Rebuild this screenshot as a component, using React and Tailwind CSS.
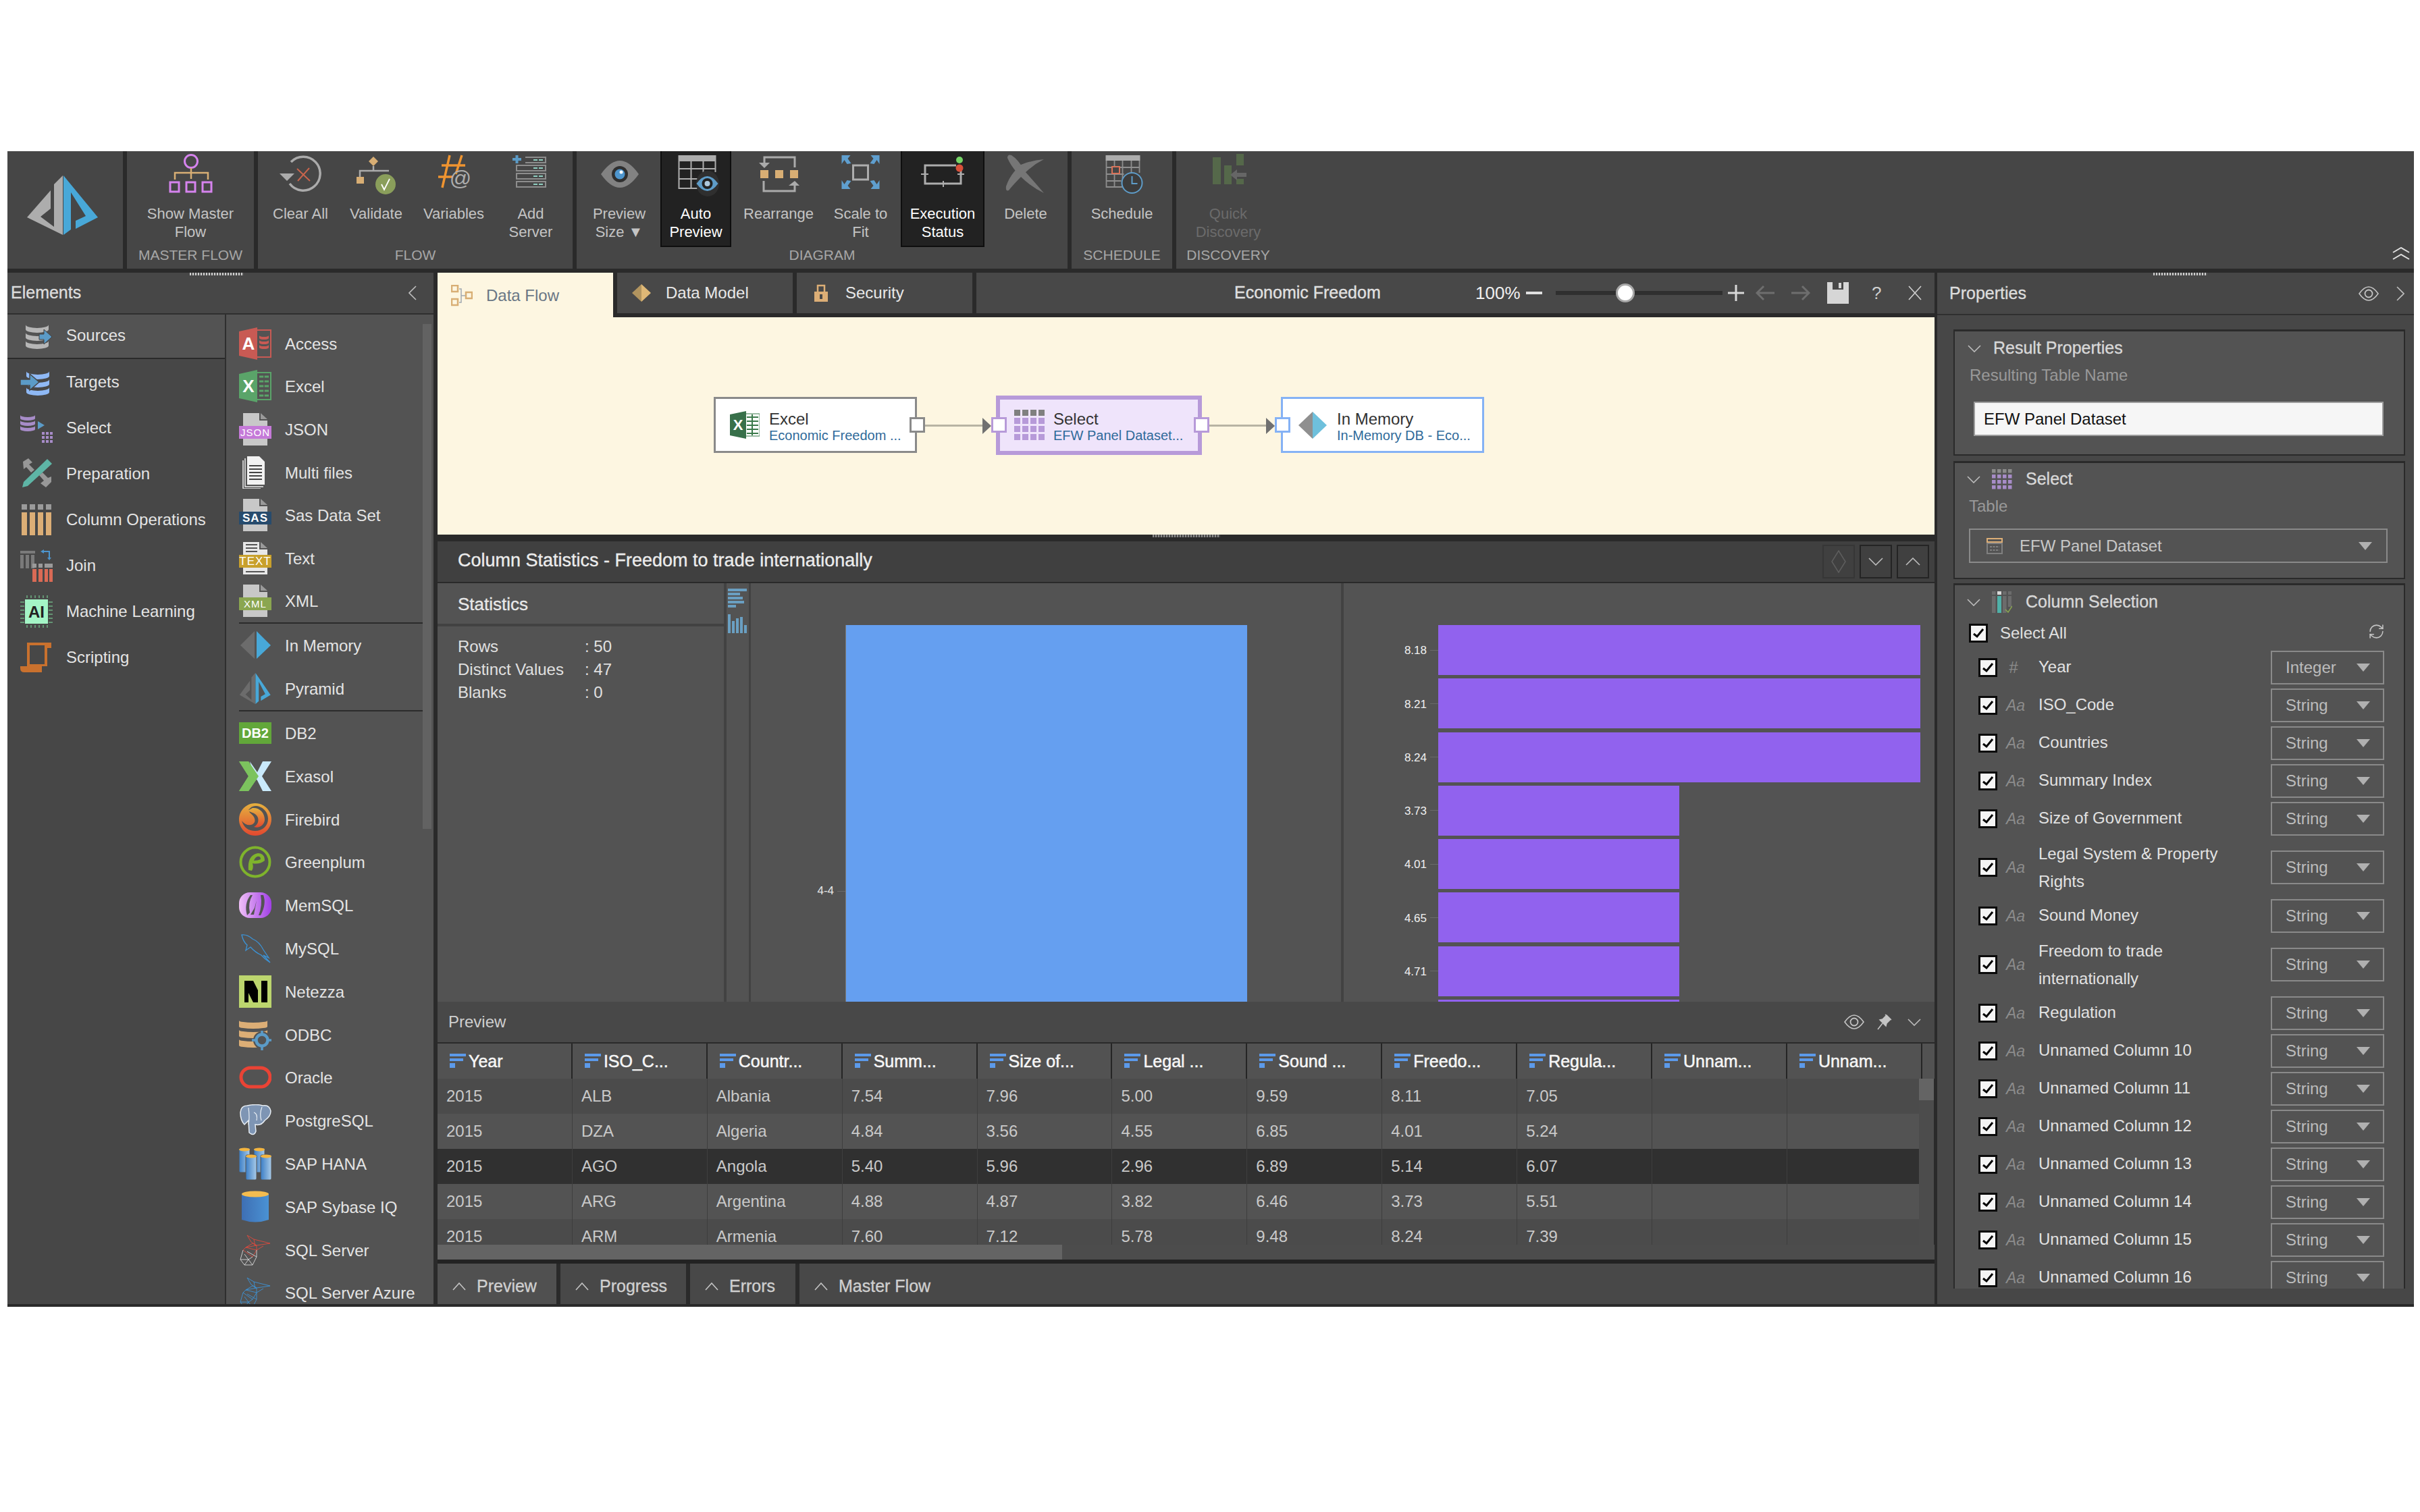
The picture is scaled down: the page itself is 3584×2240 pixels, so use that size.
import React from 'react';
import { RefreshCw } from 'lucide-react';

const med = '[-webkit-text-stroke:0.35px_currentColor]';
const med2 = '[-webkit-text-stroke:0.5px_currentColor]';

function Chev({ dir = 'down', w = 20, h = 11, color = '#bdbdbd', sw = 1.6 }) {
  const pts = {
    down: `1,1 ${w / 2},${h - 1} ${w - 1},1`,
    up: `1,${h - 1} ${w / 2},1 ${w - 1},${h - 1}`,
    left: `${w - 1},1 1,${h / 2} ${w - 1},${h - 1}`,
    right: `1,1 ${w - 1},${h / 2} 1,${h - 1}`,
  }[dir];
  return (
    <svg width={w} height={h} viewBox={`0 0 ${w} ${h}`} className="shrink-0">
      <polyline points={pts} fill="none" stroke={color} strokeWidth={sw} />
    </svg>
  );
}

function Eye({ color = '#c4c4c4' }) {
  return (
    <svg width="30" height="22" viewBox="0 0 30 22" className="shrink-0">
      <path d="M1 11 Q8 1 15 1 Q22 1 29 11 Q22 21 15 21 Q8 21 1 11Z" fill="none" stroke={color} strokeWidth="1.6" />
      <circle cx="15" cy="11" r="5.5" fill="none" stroke={color} strokeWidth="1.8" />
    </svg>
  );
}

function Caret({ color = '#b0b0b0' }) {
  return (
    <svg width="20" height="12" viewBox="0 0 20 12" className="shrink-0">
      <path d="M0 0 H20 L10 12Z" fill={color} />
    </svg>
  );
}

function TB({ cx, children }) {
  return (
    <svg width="100" height="79" viewBox={`${cx - 50} 224 100 79`} className="shrink-0">
      {children}
    </svg>
  );
}

function Btn({ w, cx, label, active, dim, children }) {
  return (
    <div className={`h-[142px] flex flex-col items-center shrink-0 ${w} ${active ? 'bg-[#222222] border-x-2 border-b-2 border-[#0e0e0e]' : ''}`}>
      <TB cx={cx}>{children}</TB>
      <div className={`text-[22px] leading-[27px] text-center whitespace-pre-line ${active ? 'text-white' : dim ? 'text-[#6b6b6b]' : 'text-[#c4c4c4]'}`}>{label}</div>
    </div>
  );
}

function Group({ cls, label, children }) {
  return (
    <div className={`bg-[#464646] flex flex-col shrink-0 ${cls}`}>
      <div className="flex h-[142px]">{children}</div>
      <div className="h-[24px] leading-[24px] text-center text-[21px] text-[#a6a6a6]">{label}</div>
    </div>
  );
}

function Logo() {
  return (
    <svg width="110" height="92" viewBox="38 258 110 92">
      <polygon points="93,260 93,348 40,322 75,282 75,309 60,321 80,336 80,273" fill="#adadad" />
      <polygon points="94,260 145,322 112,339 112,327 127,320 105,285 105,340 94,348" fill="#48a8d8" />
    </svg>
  );
}

function Toolbar() {
  return (
    <div className="flex h-[174px] gap-[6px] shrink-0">
      <div className="w-[171px] bg-[#464646] flex items-center justify-center shrink-0 pb-[14px] pr-[7px]">
        <Logo />
      </div>
      <Group cls="w-[188px]" label="MASTER FLOW">
        <Btn w="w-[188px]" cx={282} label={'Show Master\nFlow'}>
          <circle cx="283" cy="239" r="9.5" fill="none" stroke="#d683ee" strokeWidth="3" />
          <path d="M283 249 V265 M259 266 V256 H308 V266" fill="none" stroke="#d8ae74" strokeWidth="2.5" />
          <g fill="none" stroke="#d683ee" strokeWidth="3">
            <rect x="252" y="270" width="13" height="14" />
            <rect x="276" y="270" width="13" height="14" />
            <rect x="300" y="270" width="13" height="14" />
          </g>
        </Btn>
      </Group>
      <Group cls="w-[466px]" label="FLOW">
        <div className="w-[7px] shrink-0" />
        <Btn w="w-[112px]" cx={445} label="Clear All">
          <path d="M431 240 A25 25 0 1 1 429 272" fill="none" stroke="#ababab" strokeWidth="3.5" />
          <polygon points="414,257 436,257 425,268" fill="#ababab" />
          <path d="M440 250 L459 268 M458 249 L441 268" stroke="#c9654c" strokeWidth="2" fill="none" />
        </Btn>
        <Btn w="w-[112px]" cx={557} label="Validate">
          <polygon points="553,232 560,239 553,246 546,239" fill="#d8ae74" />
          <path d="M553 246 V253 M533 263 V253 H576" stroke="#ababab" strokeWidth="2.5" fill="none" />
          <rect x="528" y="262" width="11" height="10" fill="#d8ae74" />
          <circle cx="571" cy="273" r="15" fill="#8a9e5b" />
          <path d="M565 273 L569 281 L577 265" stroke="#fff" strokeWidth="1.8" fill="none" />
        </Btn>
        <Btn w="w-[118px]" cx={672} label="Variables">
          <path d="M666 230 L655 278 M684 230 L675 258 M654 245 H689 M649 262 H670" stroke="#ef9430" strokeWidth="3.5" fill="none" />
          <text x="682" y="275" fontSize="32" textAnchor="middle" fill="#adadad">@</text>
        </Btn>
        <Btn w="w-[110px]" cx={786} label={'Add\nServer'}>
          <path d="M759 236 H772 M765.5 230 V242" stroke="#5b9bc7" strokeWidth="4" fill="none" />
          <g fill="none" stroke="#8d8d8d" strokeWidth="2">
            <path d="M778 233 H808 V241 H778" />
            <rect x="765" y="245" width="43" height="8" />
            <rect x="765" y="257" width="43" height="8" />
            <rect x="765" y="269" width="43" height="8" />
          </g>
          <path d="M790 237 H796 M798 237 H804 M790 249 H796 M798 249 H804 M790 261 H796 M798 261 H804 M790 273 H796 M798 273 H804" stroke="#8fd0c2" strokeWidth="2" />
        </Btn>
      </Group>
      <Group cls="w-[727px]" label="DIAGRAM">
        <Btn w="w-[124px] pl-[2px]" cx={917} label={'Preview\nSize \u25BC'}>
          <path d="M890 258 Q904 238 918 238 Q932 238 946 258 Q932 278 918 278 Q904 278 890 258Z" fill="#828282" />
          <circle cx="918" cy="258" r="12" fill="#2f2f2f" />
          <circle cx="918" cy="258" r="7.5" fill="#4d95cd" />
          <circle cx="920" cy="255" r="2.5" fill="#fff" />
        </Btn>
        <Btn w="w-[105px]" cx={1030.5} label={'Auto\nPreview'} active>
          <rect x="1004" y="230" width="56" height="9" fill="#adadad" />
          <path d="M1005 239 V279 H1040 M1059 239 V255 M1005 250 H1059 M1005 265 H1036 M1023 239 V279 M1041 239 V258" stroke="#adadad" strokeWidth="2" fill="none" />
          <ellipse cx="1047.5" cy="272" rx="17" ry="19" fill="#2f2f2f" />
          <path d="M1031 272 Q1047 250 1063 272 Q1047 294 1031 272Z" fill="#5e9cc8" />
          <circle cx="1047" cy="272" r="8" fill="#222" />
          <circle cx="1047" cy="272" r="4" fill="#aec8dc" />
        </Btn>
        <Btn w="w-[140px]" cx={1153} label="Rearrange">
          <path d="M1132 243 V233 H1177 V248 M1131 268 V283 H1177 V274" stroke="#ababab" strokeWidth="3" fill="none" />
          <polygon points="1124,241 1140,241 1132,249" fill="#ababab" />
          <polygon points="1168,275 1184,275 1177,268" fill="#ababab" />
          <g fill="#d8ae74">
            <rect x="1126" y="252" width="12" height="12" />
            <rect x="1148" y="252" width="12" height="12" />
            <rect x="1170" y="252" width="12" height="12" />
          </g>
        </Btn>
        <Btn w="w-[103px] mr-[8px]" cx={1274.5} label={'Scale to\nFit'}>
          <rect x="1263" y="245" width="22" height="21" fill="none" stroke="#adadad" strokeWidth="3" />
          <g fill="#5f9fcf">
            <polygon points="1246,230 1259,230 1255,235 1260,242 1254,243 1250,237 1246,243" />
            <polygon points="1302,230 1289,230 1293,235 1288,242 1294,243 1298,237 1302,243" />
            <polygon points="1246,280 1259,280 1255,275 1260,268 1254,267 1250,273 1246,267" />
            <polygon points="1302,280 1289,280 1293,275 1288,268 1294,267 1298,273 1302,267" />
          </g>
        </Btn>
        <Btn w="w-[124px]" cx={1396} label={'Execution\nStatus'} active>
          <path d="M1416 245 H1370 V272 H1423 V252" stroke="#adadad" strokeWidth="3" fill="none" />
          <path d="M1364 258 H1375 M1418 258 H1428 M1397 268 V277" stroke="#adadad" strokeWidth="2" />
          <circle cx="1421" cy="237" r="5" fill="#76d667" />
          <circle cx="1421" cy="249" r="5.5" fill="#d9503a" />
        </Btn>
        <Btn w="w-[122px]" cx={1519} label="Delete">
          <path d="M1492 234 Q1492 228 1498 230 Q1508 236 1518 254 Q1536 274 1546 286 Q1526 276 1512 262 Q1498 248 1492 234Z" fill="#767676" />
          <path d="M1546 236 Q1530 244 1516 258 Q1500 274 1494 282 Q1489 284 1490 276 Q1496 258 1512 244 Q1526 238 1546 236Z" fill="#767676" />
        </Btn>
      </Group>
      <Group cls="w-[149px]" label="SCHEDULE">
        <Btn w="w-[149px]" cx={1661.5} label="Schedule">
          <rect x="1637" y="230" width="51" height="8" fill="#adadad" />
          <path d="M1638 238 V277 H1664 M1650 238 V277 M1662 238 V277 M1675 238 V256 M1687 238 V256 M1638 248 H1687 M1638 258 H1664 M1638 268 H1660" stroke="#8e8e8e" strokeWidth="1.8" fill="none" />
          <rect x="1646.5" y="247" width="11" height="10" fill="#464646" stroke="#d9735a" strokeWidth="2" />
          <circle cx="1676" cy="271" r="15" fill="#3c3c3c" stroke="#5e9cc8" strokeWidth="2" />
          <path d="M1676 261 V272 H1684" stroke="#5e9cc8" strokeWidth="2" fill="none" />
        </Btn>
      </Group>
      <div className="flex-1 bg-[#464646] flex justify-between">
        <div className="w-[154px] flex flex-col">
          <div className="flex h-[142px]">
            <Btn w="w-[154px]" cx={1819} label={'Quick\nDiscovery'} dim>
              <g fill="#55684a">
                <rect x="1796" y="233" width="12" height="40" />
                <rect x="1813" y="245" width="11" height="28" />
                <rect x="1831" y="228" width="11" height="17" />
                <rect x="1831" y="265" width="11" height="8" />
              </g>
              <polygon points="1822,259 1832,251 1832,256 1846,256 1846,262 1832,262 1832,267" fill="#666" />
            </Btn>
          </div>
          <div className="h-[24px] leading-[24px] text-center text-[21px] text-[#a6a6a6]">DISCOVERY</div>
        </div>
        <div className="flex flex-col self-end gap-[1px] pr-[6px] pb-[13px]">
          <Chev dir="up" w={26} h={9} color="#e0e0e0" sw={2} />
          <Chev dir="up" w={26} h={9} color="#e0e0e0" sw={2} />
        </div>
      </div>
    </div>
  );
}

function Db({ x, y, rx, ry = 5, h = 8, gap = 3, n = 3, fill }) {
  const out = [];
  for (let i = 0; i < n; i++) {
    const top = y + i * (h + gap);
    out.push(<path key={i} d={`M${x} ${top} v${h} a${rx} ${ry} 0 0 0 ${2 * rx} 0 v${-h} a${rx} ${ry} 0 0 1 ${-2 * rx} 0z`} fill={fill} />);
  }
  return <g>{out}</g>;
}

function Ic({ children, w = 48, h = 48 }) {
  return (
    <svg width={w} height={h} viewBox={`0 0 ${w} ${h}`} className="shrink-0">
      {children}
    </svg>
  );
}

const navIcons = {
  Sources: (
    <Ic>
      <Db x={8} y={8} rx={17} ry={5} h={7} gap={5} fill="#b6b6b6" />
      <polygon points="28,22 35,22 35,15 47,26 35,37 35,30 28,30" fill="#5b9bc7" stroke="#3f3f3f" strokeWidth="1" />
    </Ic>
  ),
  Targets: (
    <Ic>
      <Db x={9} y={8} rx={17} ry={5} h={7} gap={5} fill="#8fb9f5" />
      <polygon points="0,20 14,20 14,12 28,24 14,36 14,29 0,29" fill="#5b9bc7" stroke="#474747" strokeWidth="1.5" />
    </Ic>
  ),
  Select: (
    <Ic>
      <Db x={0} y={5} rx={11} ry={3} h={5} gap={3} fill="#a78cc8" />
      <polygon points="26,14 36,20 26,26" fill="#5b9bc7" />
      <g fill="#a78cc8">
        {[0, 1, 2].map((r) => [0, 1, 2].map((c) => <rect key={`${r}${c}`} x={32 + c * 6} y={30 + r * 6} width="4" height="4" />))}
      </g>
    </Ic>
  ),
  Preparation: (
    <Ic>
      <path d="M4 6 L12 1 L18 7 L13 10 L21 18 L16 22 L9 14 L5 17 Z M28 26 L33 22 L41 30 L46 28 L46 36 L38 44 L30 38 L35 34Z" fill="#989898" />
      <polygon points="40,2 47,9 11,42 3,44 5,36" fill="#5eb5a6" />
    </Ic>
  ),
  'Column Operations': (
    <Ic>
      <g fill="#9a9a9a">
        <rect x="2" y="1" width="8" height="8" /><rect x="14" y="1" width="8" height="8" /><rect x="26" y="1" width="8" height="8" /><rect x="38" y="1" width="8" height="8" />
      </g>
      <g fill="#dcae76">
        <rect x="2" y="13" width="8" height="34" /><rect x="14" y="13" width="8" height="34" /><rect x="26" y="13" width="8" height="34" /><rect x="38" y="13" width="8" height="34" />
      </g>
    </Ic>
  ),
  Join: (
    <Ic>
      <rect x="0" y="2" width="22" height="4" fill="#7a7a7a" />
      <g fill="#7a7a7a">
        <rect x="0" y="8" width="5" height="20" /><rect x="8" y="8" width="5" height="20" /><rect x="16" y="8" width="5" height="20" />
      </g>
      <path d="M32 3 H43 V12" stroke="#4d95cd" strokeWidth="2" fill="none" />
      <polygon points="30,3 35,0 35,6" fill="#4d95cd" /><polygon points="40,12 46,12 43,16" fill="#4d95cd" />
      <g fill="#9a9a9a"><rect x="18" y="21" width="6" height="6" /><rect x="27" y="21" width="6" height="6" /><rect x="36" y="21" width="6" height="6" /><rect x="42" y="21" width="6" height="6" /></g>
      <g fill="#d96a55"><rect x="18" y="29" width="6" height="19" /><rect x="27" y="29" width="6" height="19" /><rect x="36" y="29" width="5" height="19" /><rect x="43" y="29" width="5" height="19" /></g>
    </Ic>
  ),
  'Machine Learning': (
    <Ic>
      <path d="M10 0 V48 M16 0 V48 M22 0 V48 M28 0 V48 M34 0 V48 M40 0 V48 M0 10 H48 M0 16 H48 M0 22 H48 M0 28 H48 M0 34 H48 M0 40 H48" stroke="#6fae83" strokeWidth="1.5" />
      <rect x="6" y="4" width="36" height="40" fill="#474747" />
      <rect x="7" y="6" width="34" height="36" fill="#a4f5c6" />
      <text x="24" y="33" fontSize="24" fontWeight="700" textAnchor="middle" fill="#222">AI</text>
    </Ic>
  ),
  Scripting: (
    <Ic>
      <path d="M10 2 H46 V10 H40 V37 H32 V46 H6 Q0 46 0 40 V37 H10 Z M14 6 V34 H36 V6 Z" fill="#c9712e" fillRule="evenodd" />
    </Ic>
  ),
};

function FileIc({ banner, label, page = '#c8c8c8', lines, bold, lg }) {
  return (
    <Ic>
      <polygon points="6,0 30,0 30,11 42,11 42,48 6,48" fill={page} />
      <polygon points="32,0 42,9 32,9" fill="#9a9a9a" />
      {lines && <path d="M10 4 H27 M10 9 H27 M10 14 H27 M10 44 H38" stroke="#555" strokeWidth="2" />}
      <rect x="0" y="19" width="48" height="19" fill={banner} />
      <text x="24" y="34" fontSize={lg ? 17 : 15} fontWeight={bold ? 700 : 400} letterSpacing="1" textAnchor="middle" fill="#fff">{label}</text>
    </Ic>
  );
}

const wire = (a, b) => (
  <Ic>
    <g fill="none" strokeWidth="0.9">
      <path d="M12 2 L22 8 L30 10 L46 14 L26 17 L20 14 L10 20 L26 24 L20 34 L6 24 L10 20 M12 2 L18 12 L26 17 M22 8 L24 18 M10 20 L26 17 L26 24 L36 18" stroke={a} />
      <path d="M6 24 L2 38 L8 46 L20 46 L26 34 L26 24 M2 38 L14 38 L20 46 M8 30 L14 38 L20 34 M8 46 L14 38 M26 34 L12 26" stroke={b} />
    </g>
  </Ic>
);

const listIcons = {
  Access: (
    <Ic>
      <rect x="26" y="4" width="21" height="40" fill="none" stroke="#c85a54" strokeWidth="2" />
      <Db x={30} y={12} rx={7} ry={2} h={4} gap={3} fill="#c85a54" />
      <polygon points="0,6 27,0 27,48 0,42" fill="#c85a54" />
      <text x="14" y="33" fontSize="26" fontWeight="700" textAnchor="middle" fill="#fff">A</text>
    </Ic>
  ),
  Excel: (
    <Ic>
      <rect x="26" y="4" width="21" height="40" fill="none" stroke="#5aa469" strokeWidth="2" />
      <path d="M30 10 H44 M30 17 H44 M30 24 H44 M30 31 H44 M30 38 H44" stroke="#5aa469" strokeWidth="3" />
      <path d="M37 8 V41" stroke="#535353" strokeWidth="1.5" />
      <polygon points="0,6 27,0 27,48 0,42" fill="#5aa469" />
      <text x="14" y="33" fontSize="26" fontWeight="700" textAnchor="middle" fill="#fff">X</text>
    </Ic>
  ),
  JSON: <FileIc banner="#c57ad8" label="JSON" />,
  'Multi files': (
    <Ic>
      <path d="M6 6 V48 H32 M9 3 V45 H36" fill="none" stroke="#f0f0f0" strokeWidth="1.5" />
      <polygon points="12,0 30,0 38,8 38,42 12,42" fill="#f2f2f2" />
      <path d="M15 14 H34 M15 19 H34 M15 24 H34 M15 29 H34 M15 34 H34" stroke="#444" strokeWidth="2" />
    </Ic>
  ),
  'Sas Data Set': <FileIc banner="#274b6d" label="SAS" bold lg />,
  Text: <FileIc banner="#c8a02c" label="TEXT" page="#e8e8e8" lines lg />,
  XML: <FileIc banner="#8aa650" label="XML" />,
  'In Memory': (
    <Ic>
      <polygon points="23,3 23,44 2,24" fill="#6c6c6c" />
      <polygon points="26,3 26,44 47,24" fill="#48a8d8" />
    </Ic>
  ),
  Pyramid: (
    <svg width="48" height="48" viewBox="38 258 110 92" preserveAspectRatio="none" className="shrink-0">
      <polygon points="93,260 93,348 40,322 75,282 75,309 60,321 80,336 80,273" fill="#6c6c6c" />
      <polygon points="94,260 145,322 112,339 112,327 127,320 105,285 105,340 94,348" fill="#48a8d8" />
    </svg>
  ),
  DB2: (
    <Ic>
      <rect x="0" y="8" width="48" height="32" fill="#62a73a" />
      <text x="24" y="31" fontSize="20" fontWeight="700" textAnchor="middle" fill="#fff">DB2</text>
    </Ic>
  ),
  Exasol: (
    <Ic>
      <polygon points="0,2 14,2 29,24 14,46 0,46 14,24" fill="#7cc35e" />
      <polygon points="16,2 27,18 35,2 48,2 34,24 48,46 35,46 27,30 22,24" fill="#c9eafc" />
      <polygon points="0,2 14,2 29,24 14,46 0,46 14,24" fill="#7cc35e" />
    </Ic>
  ),
  Firebird: (
    <Ic>
      <defs>
        <linearGradient id="fb" x1="0" y1="0" x2="0" y2="1">
          <stop offset="0" stopColor="#e5b13e" /><stop offset="1" stopColor="#e2482f" />
        </linearGradient>
      </defs>
      <path fillRule="evenodd" fill="url(#fb)" d="M24 0 A24 24 0 1 1 23.9 0Z M24 4 C34 4 43 12 43 23 C43 34 34 41 24 41 C14 41 7 36 4 26 C10 34 20 34 23 28 C25 22 20 17 16 14 L14 10 C17 6 20 4 24 4Z" />
      <path fill="url(#fb)" d="M13 11 L20 7 C30 6 38 14 38 24 C38 32 30 38 22 35 C28 32 31 24 26 18 C23 14 18 14 13 11Z" />
    </Ic>
  ),
  Greenplum: (
    <Ic>
      <circle cx="24" cy="24" r="21.5" fill="none" stroke="#7fb32c" strokeWidth="4" />
      <path d="M14 36 Q12 14 28 11 Q38 11 38 22 Q30 28 20 26 Q22 32 19 37Z M22 22 Q28 22 32 20 Q32 15 27 16 Q23 18 22 22Z" fill="#7fb32c" fillRule="evenodd" />
    </Ic>
  ),
  MemSQL: (
    <Ic>
      <defs>
        <linearGradient id="ms" x1="0" y1="0" x2="1" y2="0">
          <stop offset="0" stopColor="#f0c0f7" /><stop offset="1" stopColor="#a13fe6" />
        </linearGradient>
      </defs>
      <rect x="0" y="5" width="48" height="38" rx="16" fill="url(#ms)" />
      <path d="M17 9 L20 9 Q13 20 16 35 L12 39 Q7 22 17 9Z M32 9 L36 9 Q41 22 32 39 L29 39 Q35 24 32 9Z M26 17 L22 38 L17 38 L23 28Z" fill="#535353" />
    </Ic>
  ),
  MySQL: (
    <Ic>
      <path d="M4 4 Q12 3 20 10 Q30 14 36 26 L44 38 L36 34 L46 45 Q38 40 33 34 Q24 30 17 22 L10 27 L12 19 Q6 14 4 4Z" fill="none" stroke="#3c93d6" strokeWidth="1.3" />
    </Ic>
  ),
  Netezza: (
    <Ic>
      <rect x="0" y="0" width="48" height="48" fill="#bcd56e" />
      <path d="M8 8 H21 L28 22 V40 H21 L14 26 V40 H8Z M33 8 H42 V40 H33Z" fill="#000" />
    </Ic>
  ),
  ODBC: (
    <Ic>
      <Db x={0} y={3} rx={21} ry={3} h={9} gap={5} fill="#dcae76" />
      <circle cx="34" cy="32" r="13" fill="#535353" />
      <circle cx="34" cy="32" r="8.5" fill="none" stroke="#5b9bc7" strokeWidth="4.5" />
      <path d="M34 18 V23 M34 41 V47 M19 32 H25 M43 32 H48" stroke="#5b9bc7" strokeWidth="3.5" />
    </Ic>
  ),
  Oracle: (
    <Ic>
      <rect x="3" y="10" width="43" height="28" rx="14" fill="none" stroke="#ea4335" strokeWidth="5" />
    </Ic>
  ),
  PostgreSQL: (
    <Ic>
      <path d="M12 2 Q3 2 2 12 Q2 24 8 30 L14 24 L15 42 Q22 48 25 40 L24 30 Q33 32 38 24 Q47 18 47 10 Q45 0 35 2 Q26 -1 12 2Z" fill="#7e95b4" stroke="#e8eef4" strokeWidth="1.5" />
      <path d="M14 5 Q16 20 14 30 M34 4 Q30 14 33 24 M22 12 Q28 14 26 24" fill="none" stroke="#e8eef4" strokeWidth="1.2" />
    </Ic>
  ),
  'SAP HANA': (
    <Ic>
      <defs>
        <linearGradient id="cy" x1="0" y1="0" x2="1" y2="0">
          <stop offset="0" stopColor="#3a7dc6" /><stop offset="1" stopColor="#a9cbe8" />
        </linearGradient>
      </defs>
      {[[0, 1, 36], [22, 1, 36], [10, 11, 37], [32, 11, 37]].map(([x, y, h], i) => (
        <g key={i}>
          <rect x={x} y={y} width="16" height={h} rx="2" fill="url(#cy)" stroke="#535353" strokeWidth="1" />
          <ellipse cx={x + 8} cy={y + 2} rx="8" ry="2.5" fill="#f4b53f" />
        </g>
      ))}
    </Ic>
  ),
  'SAP Sybase IQ': (
    <Ic>
      <defs>
        <linearGradient id="sy" x1="0" y1="0" x2="1" y2="0">
          <stop offset="0" stopColor="#3e6fb4" /><stop offset="1" stopColor="#4a92d4" />
        </linearGradient>
      </defs>
      <path d="M4 5 V43 Q24 50 44 43 V5Z" fill="url(#sy)" />
      <ellipse cx="24" cy="5" rx="20" ry="4.5" fill="#f4bc4f" />
    </Ic>
  ),
  'SQL Server': wire('#e04a3d', '#d8d8d8'),
  'SQL Server Azure': wire('#3c93d6', '#3c93d6'),
};

function ListGroup({ items, h }) {
  return (
    <div className="flex flex-col">
      {items.map((t) => (
        <div key={t} className={`flex items-center ${h} pl-[19px] gap-[20px] shrink-0`}>
          {listIcons[t]}
          <span className="text-[24px] text-[#e4e4e4] whitespace-nowrap mt-[2px]">{t}</span>
        </div>
      ))}
    </div>
  );
}

function LeftPanel() {
  const nav = ['Targets', 'Select', 'Preparation', 'Column Operations', 'Join', 'Machine Learning', 'Scripting'];
  return (
    <div className="w-[631px] shrink-0 flex flex-col bg-[#474747] relative mr-[6px]">
      <div className="absolute top-0 left-[270px] w-[80px] h-[4px] bg-[repeating-linear-gradient(90deg,#cfcfcf_0_2px,#555555_2px_4px)]" />
      <div className="h-[60px] flex items-center justify-between pl-[5px] pr-[25px] shrink-0 border-0">
        <span className={`text-[25px] text-[#dcdcdc] ${med}`}>Elements</span>
        <Chev dir="left" w={12} h={22} />
      </div>
      <div className="h-[2px] bg-[#2f2f2f] shrink-0" />
      <div className="flex flex-1 overflow-hidden">
        <div className="w-[324px] shrink-0 flex flex-col border-r-2 border-[#2f2f2f]">
          <div className="h-[66px] shrink-0 bg-[#535353] border-b-2 border-[#2a2a2a] flex items-center pl-[19px] gap-[20px] pb-[2px]">
            {navIcons.Sources}
            <span className="text-[24px] text-[#e4e4e4]">Sources</span>
          </div>
          {nav.map((t) => (
            <div key={t} className="h-[68px] shrink-0 flex items-center pl-[19px] gap-[20px]">
              {navIcons[t]}
              <span className="text-[24px] text-[#e4e4e4] whitespace-nowrap">{t}</span>
            </div>
          ))}
        </div>
        <div className="flex-1 bg-[#535353] flex">
          <div className="w-[291px] shrink-0 pt-[11px] overflow-hidden">
            <ListGroup h="h-[63.6px]" items={['Access', 'Excel', 'JSON', 'Multi files', 'Sas Data Set', 'Text', 'XML']} />
            <div className="h-[2px] ml-[19px] bg-[#2b2b2b]" />
            <ListGroup h="h-[64px]" items={['In Memory', 'Pyramid']} />
            <div className="h-[2px] ml-[19px] bg-[#2b2b2b]" />
            <ListGroup h="h-[63.8px]" items={['DB2', 'Exasol', 'Firebird', 'Greenplum', 'MemSQL', 'MySQL', 'Netezza', 'ODBC', 'Oracle', 'PostgreSQL', 'SAP HANA', 'SAP Sybase IQ', 'SQL Server', 'SQL Server Azure']} />
          </div>
          <div className="w-[13px] h-[748px] mt-[14px] bg-[#626262] shrink-0" />
        </div>
      </div>
    </div>
  );
}

function Port({ cls }) {
  return <div className={`absolute w-[23px] h-[23px] bg-white border-[3px] ${cls}`} />;
}

function Connector({ l, a }) {
  return (
    <>
      <div className={`absolute top-[159px] w-[85px] h-[3px] bg-[#b8b3a3] ${l}`} />
      <svg width="13" height="24" viewBox="0 0 13 24" className={`absolute top-[148.5px] ${a}`}>
        <polygon points="0,0 13,12 0,24" fill="#707070" />
      </svg>
    </>
  );
}

function NodeText({ a, b }) {
  return (
    <div className="flex flex-col pt-[6px]">
      <div className="text-[24px] leading-[23px] text-[#333333] mb-[2px]">{a}</div>
      <div className="text-[20px] leading-[23px] text-[#2f6a9a] whitespace-nowrap">{b}</div>
    </div>
  );
}

function Canvas() {
  return (
    <div className="relative h-[322px] bg-[#fdf6e1] shrink-0">
      <div className="absolute left-[409px] top-[118px] w-[301px] h-[83px] bg-white border-[3px] border-[#8a8a8a] flex items-center pl-[21px] gap-[14px]">
        <svg width="44" height="41" viewBox="0 0 44 41" className="shrink-0">
          <rect x="22" y="4" width="22" height="33" fill="#fff" stroke="#3b7a4b" strokeWidth="1" />
          <path d="M25 9 H42 M25 15 H42 M25 21 H42 M25 27 H42 M25 33 H42 M33 5 V36" stroke="#3b7a4b" strokeWidth="2" />
          <polygon points="0,5 24,0 24,41 0,36" fill="#38704a" />
          <text x="12" y="28" fontSize="22" fontWeight="700" textAnchor="middle" fill="#fff">X</text>
        </svg>
        <NodeText a="Excel" b="Economic Freedom ..." />
      </div>
      <div className="absolute left-[827px] top-[116px] w-[305px] h-[88px] bg-[#efe4fb] border-[6px] border-[#b79ad9] flex items-center pl-[21px] gap-[13px]">
        <svg width="45" height="46" viewBox="0 0 45 46" className="shrink-0">
          {[0, 1, 2, 3].map((r) => [0, 1, 2, 3].map((c) => (
            <rect key={`${r}${c}`} x={c * 12} y={r * 12} width="9" height="9" fill={r === 0 ? '#808080' : '#b79ad9'} />
          )))}
        </svg>
        <NodeText a="Select" b="EFW Panel Dataset..." />
      </div>
      <div className="absolute left-[1249px] top-[118px] w-[301px] h-[83px] bg-white border-[3px] border-[#85b2f5] flex items-center pl-[23px] gap-[15px]">
        <svg width="42" height="40" viewBox="0 0 42 40" className="shrink-0">
          <polygon points="21,0 21,40 0,20" fill="#8f8f8f" />
          <polygon points="21,0 21,40 42,20" fill="#6ec0dc" />
        </svg>
        <NodeText a="In Memory" b="In-Memory DB - Eco..." />
      </div>
      <Connector l="left-[722px]" a="left-[807px]" />
      <Connector l="left-[1142px]" a="left-[1227px]" />
      <Port cls="left-[699px] top-[148px] border-[#8a8a8a]" />
      <Port cls="left-[820px] top-[148px] border-[#b79ad9]" />
      <Port cls="left-[1120px] top-[148px] border-[#b79ad9]" />
      <Port cls="left-[1240px] top-[148px] border-[#85b2f5]" />
    </div>
  );
}

function TabsRow() {
  return (
    <div className="flex h-[66px] gap-[6px] shrink-0">
      <div className="w-[260px] bg-[#fdf6e1] flex pt-[17px] pl-[20px] gap-[20px] shrink-0">
        <svg width="32" height="32" viewBox="0 0 32 32" className="shrink-0 mt-[1px]">
          <g fill="none" stroke="#d8ae74" strokeWidth="2.5"><rect x="1" y="1" width="9" height="9" /><rect x="1" y="21" width="9" height="9" /><rect x="22" y="11" width="9" height="9" /></g>
          <path d="M12 6 H15 V26 H12 M15 16 H21" fill="none" stroke="#a0a8b0" strokeWidth="1.5" />
        </svg>
        <span className="text-[24px] leading-[34px] text-[#6a7785]">Data Flow</span>
      </div>
      <div className="flex flex-col flex-1">
        <div className="flex h-[60px] gap-[6px]">
          <div className="w-[260px] bg-[#484848] flex items-center pl-[22px] gap-[22px]">
            <svg width="28" height="26" viewBox="0 0 28 26" className="shrink-0">
              <polygon points="14,0 14,26 0,13" fill="#b1945f" /><polygon points="14,0 14,26 28,13" fill="#dfb876" />
            </svg>
            <span className="text-[24px] text-[#e8e8e8]">Data Model</span>
          </div>
          <div className="w-[260px] bg-[#484848] flex items-center pl-[26px] gap-[26px]">
            <svg width="20" height="26" viewBox="0 0 20 26" className="shrink-0">
              <path d="M5 12 V2 H15 V12" fill="none" stroke="#dcae76" strokeWidth="2.5" />
              <rect x="0" y="11" width="20" height="15" fill="#dcae76" /><rect x="8" y="15" width="4" height="7" fill="#484848" />
            </svg>
            <span className="text-[24px] text-[#e8e8e8]">Security</span>
          </div>
          <div className="flex-1 bg-[#484848] flex items-center pl-[382px]">
            <span className={`w-[357px] text-[25px] text-[#e0e0e0] ${med}`}>Economic Freedom</span>
            <span className="w-[75px] text-[26px] text-[#f0f0f0]">100%</span>
            <div className="w-[24px] h-[4px] bg-[#e0e0e0]" />
            <div className="w-[247px] h-[6px] bg-[#2f2f2f] ml-[20px] flex items-center">
              <div className="w-[28px] h-[28px] rounded-full bg-white border-[3px] border-[#a8a8a8] ml-[89px] shrink-0" />
            </div>
            <svg width="24" height="24" viewBox="0 0 24 24" className="ml-[8px] shrink-0"><path d="M0 12 H24 M12 0 V24" stroke="#d8d8d8" strokeWidth="3" /></svg>
            <svg width="28" height="24" viewBox="0 0 28 24" className="ml-[17px] shrink-0"><path d="M2 12 H28 M12 2 L2 12 L12 22" stroke="#6e6e6e" strokeWidth="3" fill="none" /></svg>
            <svg width="28" height="24" viewBox="0 0 28 24" className="ml-[25px] shrink-0"><path d="M0 12 H26 M16 2 L26 12 L16 22" stroke="#6e6e6e" strokeWidth="3" fill="none" /></svg>
            <svg width="32" height="32" viewBox="0 0 32 32" className="ml-[25px] shrink-0"><path d="M0 0 H32 V32 H0Z" fill="#d6d6d6" /><path d="M8 0 H24 V11 H8Z" fill="#484848" /><rect x="17" y="1" width="4" height="8" fill="#d6d6d6" /></svg>
            <span className="ml-[34px] text-[26px] text-[#d0d0d0] w-[16px] shrink-0">?</span>
            <svg width="22" height="22" viewBox="0 0 22 22" className="ml-[37px] shrink-0"><path d="M2 1 L20 21 M20 1 L2 21" stroke="#d0d0d0" strokeWidth="1.6" /></svg>
          </div>
        </div>
      </div>
    </div>
  );
}

function SmallBtn({ children, dim }) {
  return (
    <div className={`h-[50px] flex items-center justify-center border-2 ${dim ? 'border-[#363636] bg-[#404040]' : 'border-[#242424] bg-[#404040]'} w-[48px]`}>
      {children}
    </div>
  );
}

function StatsArea() {
  const bars = [['8.18', 1], ['8.21', 1], ['8.24', 1], ['3.73', 0], ['4.01', 0], ['4.65', 0], ['4.71', 0], ['', 0]];
  return (
    <div className="shrink-0 flex flex-col">
      <div className="h-[60px] bg-[#404040] flex items-center pl-[30px] pr-[8px] justify-between">
        <span className={`text-[27px] text-[#ececec] pb-[4px] ${med}`}>Column Statistics - Freedom to trade internationally</span>
        <div className="flex gap-[7px]">
          <SmallBtn dim>
            <svg width="22" height="34" viewBox="0 0 22 34"><polygon points="11,1 21,17 11,33 1,17" fill="none" stroke="#5e5e5e" strokeWidth="1.5" /></svg>
          </SmallBtn>
          <SmallBtn><Chev dir="down" w={22} h={12} /></SmallBtn>
          <SmallBtn><Chev dir="up" w={22} h={12} /></SmallBtn>
        </div>
      </div>
      <div className="h-[2px] bg-[#2a2a2a]" />
      <div className="flex h-[620px] bg-[#535353] overflow-hidden">
        <div className="w-[424px] shrink-0 flex flex-col">
          <div className={`h-[60px] flex items-center pl-[30px] pt-[2px] text-[26px] text-[#e8e8e8] ${med} shrink-0`}>Statistics</div>
          <div className="h-[4px] bg-[#424242] shrink-0" />
          <div className="pt-[13px] pl-[30px] text-[24px] text-[#e0e0e0]">
            {[['Rows', ': 50'], ['Distinct Values', ': 47'], ['Blanks', ': 0']].map(([k, v]) => (
              <div key={k} className="flex h-[34px] items-center">
                <span className="w-[188px]">{k}</span><span>{v}</span>
              </div>
            ))}
          </div>
        </div>
        <div className="w-[4px] bg-[#424242] shrink-0" />
        <div className="w-[33px] shrink-0 pt-[8px] pl-[2px]">
          <svg width="28" height="66" viewBox="0 0 28 66">
            <g fill="#6a9fc2">
              <rect x="0" y="0" width="28" height="4" /><rect x="0" y="6" width="18" height="4" /><rect x="0" y="12" width="22" height="4" /><rect x="0" y="18" width="24" height="4" /><rect x="0" y="24" width="12" height="4" />
              <rect x="0" y="38" width="4" height="28" /><rect x="6" y="48" width="4" height="18" /><rect x="12" y="44" width="4" height="22" /><rect x="18" y="42" width="4" height="24" /><rect x="24" y="54" width="4" height="12" />
            </g>
          </svg>
        </div>
        <div className="w-[3px] bg-[#424242] shrink-0" />
        <div className="w-[874px] shrink-0 flex pt-[62px]">
          <div className="w-[140px] shrink-0 flex items-center justify-end pt-[230px] gap-[5px]">
            <span className="text-[17px] text-[#e8e8e8]">4-4</span>
            <div className="w-[12px] h-px bg-[#6a6a6a]" />
          </div>
          <div className="w-[595px] h-full bg-[#659ff0] border-l border-[#7a7a7a] shrink-0" />
        </div>
        <div className="w-[4px] bg-[#424242] shrink-0" />
        <div className="flex-1 flex flex-col gap-[5.3px] pt-[62px]">
          {bars.map(([l, long], i) => (
            <div key={i} className="flex items-center h-[74px] shrink-0">
              <span className="w-[123px] text-right text-[17px] text-[#f0f0f0] shrink-0 pt-[2px]">{l}</span>
              <div className="w-[5px] shrink-0" />
              <div className="w-[12px] h-px bg-[#6a6a6a] shrink-0" />
              <div className={`h-full bg-[#9162ee] shrink-0 ${long ? 'w-[714px]' : 'w-[357px]'}`} />
            </div>
          ))}
        </div>
      </div>
    </div>
  );
}

const heads = ['Year', 'ISO_C...', 'Countr...', 'Summ...', 'Size of...', 'Legal ...', 'Sound ...', 'Freedo...', 'Regula...', 'Unnam...', 'Unnam...'];
const rows = [
  ['2015', 'ALB', 'Albania', '7.54', '7.96', '5.00', '9.59', '8.11', '7.05', '', ''],
  ['2015', 'DZA', 'Algeria', '4.84', '3.56', '4.55', '6.85', '4.01', '5.24', '', ''],
  ['2015', 'AGO', 'Angola', '5.40', '5.96', '2.96', '6.89', '5.14', '6.07', '', ''],
  ['2015', 'ARG', 'Argentina', '4.88', '4.87', '3.82', '6.46', '3.73', '5.51', '', ''],
  ['2015', 'ARM', 'Armenia', '7.60', '7.12', '5.78', '9.48', '8.24', '7.39', '', ''],
];
const rowBg = ['bg-[#4b4b4b]', 'bg-[#535353]', 'bg-[#303030]', 'bg-[#535353]', 'bg-[#4b4b4b]'];

function PreviewTable() {
  return (
    <div className="shrink-0 flex flex-col">
      <div className="h-[60px] bg-[#484848] flex items-center pl-[16px] pr-[20px] justify-between">
        <span className="text-[24px] text-[#cfcfcf]">Preview</span>
        <div className="flex items-center gap-[18px]">
          <Eye />
          <svg width="24" height="26" viewBox="0 0 24 26" className="shrink-0">
            <path d="M13 2 L22 10 M15 3 L9 9 L5 10 L14 19 L15 15 L21 9Z" fill="#c4c4c4" stroke="#c4c4c4" strokeWidth="1.5" />
            <path d="M9 15 L2 24" stroke="#c4c4c4" strokeWidth="1.6" />
          </svg>
          <div className="ml-[4px]"><Chev dir="down" w={20} h={11} /></div>
        </div>
      </div>
      <div className="h-[2px] bg-[#2a2a2a]" />
      <div className="flex h-[52px] bg-[#525252]">
        {heads.map((h, i) => (
          <div key={i} className="w-[199.9px] shrink-0 border-r-2 border-[#252525] flex items-center pl-[18px] gap-[4px]">
            <svg width="24" height="22" viewBox="0 0 24 22" className="shrink-0">
              <g fill="#5c9aea"><rect x="0" y="0" width="24" height="4" /><rect x="0" y="7" width="20" height="4" /><rect x="0" y="14" width="8" height="7" /></g>
            </svg>
            <span className={`text-[25px] text-[#f6f6f6] whitespace-nowrap pt-[2px] ${med2}`}>{h}</span>
          </div>
        ))}
      </div>
      <div className="flex h-[246px]">
        <div className="w-[2194px] shrink-0 overflow-hidden flex flex-col">
          {rows.map((r, ri) => (
            <div key={ri} className={`flex h-[52px] shrink-0 ${rowBg[ri]}`}>
              {r.map((c, ci) => (
                <div key={ci} className="w-[199.9px] shrink-0 border-r border-[#3e3e3e] flex items-center pl-[13px] text-[24px] text-[#c9c9c9]">{c}</div>
              ))}
            </div>
          ))}
        </div>
        <div className="w-[22px] shrink-0 bg-[#4c4c4c]">
          <div className="h-[32px] bg-[#646464]" />
        </div>
      </div>
      <div className="h-[22px] bg-[#4c4c4c]">
        <div className="w-[925px] h-full bg-[#646464]" />
      </div>
    </div>
  );
}

function BottomTabs() {
  const t = [['w-[176px] bg-[#505050]', 'Preview'], ['w-[186px] bg-[#484848]', 'Progress'], ['w-[156px] bg-[#484848]', 'Errors'], ['flex-1 bg-[#484848]', 'Master Flow']];
  return (
    <div className="flex h-[60px] gap-[6px] shrink-0">
      {t.map(([c, l]) => (
        <div key={l} className={`${c} flex items-center pl-[22px] gap-[16px] pt-[7px]`}>
          <Chev dir="up" w={20} h={12} color="#c4c4c4" />
          <span className={`text-[25px] text-[#cfcfcf] ${med}`}>{l}</span>
        </div>
      ))}
    </div>
  );
}

function Center() {
  return (
    <div className="w-[2217px] shrink-0 flex flex-col mr-[4px]">
      <TabsRow />
      <Canvas />
      <div className="h-[10px] bg-[#2a2a2a] flex justify-center shrink-0">
        <div className="w-[100px] h-[4px] bg-[repeating-linear-gradient(90deg,#8a8a8a_0_2px,#444444_2px_4px)]" />
      </div>
      <StatsArea />
      <PreviewTable />
      <div className="h-[6px] bg-[#222222] shrink-0" />
      <BottomTabs />
    </div>
  );
}

function Check({ cls }) {
  return (
    <div className={`w-[28px] h-[28px] border-[3px] border-[#0a0a0a] bg-[#f4f4f4] flex items-center justify-center shrink-0 ${cls || ''}`}>
      <svg width="18" height="16" viewBox="0 0 18 16"><path d="M2 9 L7 13 L16 2" stroke="#000" strokeWidth="3" fill="none" /></svg>
    </div>
  );
}

const cols = [
  ['Year', 'Integer', '#'],
  ['ISO_Code'], ['Countries'], ['Summary Index'], ['Size of Government'],
  ['Legal System & Property\nRights', 'String', 'Aa', true],
  ['Sound Money'],
  ['Freedom to trade\ninternationally', 'String', 'Aa', true],
  ['Regulation'],
  ['Unnamed Column 10'], ['Unnamed Column 11'], ['Unnamed Column 12'], ['Unnamed Column 13'], ['Unnamed Column 14'], ['Unnamed Column 15'], ['Unnamed Column 16'],
];

function Section({ cls, children }) {
  return <div className={`ml-[24px] w-[669px] bg-[#535353] border-2 border-t-[3px] border-[#2a2a2a] pl-[1px] shrink-0 overflow-hidden ${cls}`}>{children}</div>;
}

function RightPanel() {
  return (
    <div className="flex-1 bg-[#474747] flex flex-col relative overflow-hidden">
      <div className="absolute top-0 left-[320px] w-[80px] h-[4px] bg-[repeating-linear-gradient(90deg,#cfcfcf_0_2px,#555555_2px_4px)]" />
      <div className="h-[61px] flex items-center justify-between pl-[18px] pr-[14px] shrink-0">
        <span className={`text-[25px] text-[#dcdcdc] ${med}`}>Properties</span>
        <div className="flex items-center gap-[26px]">
          <Eye />
          <Chev dir="right" w={12} h={22} />
        </div>
      </div>
      <div className="h-[2px] bg-[#2f2f2f] shrink-0" />
      <div className="h-[21px] shrink-0" />
      <Section cls="h-[187px]">
        <div className="h-[50px] flex items-center">
          <div className="w-[56px] flex justify-center shrink-0"><Chev dir="down" w={20} h={11} /></div>
          <span className={`text-[25px] text-[#d8d8d8] ${med}`}>Result Properties</span>
        </div>
        <div className="h-[30px] leading-[30px] pl-[21px] text-[24px] text-[#999999]">Resulting Table Name</div>
        <div className="mt-[24px] ml-[27px] w-[607px] h-[51px] bg-[#f6f6f6] border-2 border-[#9c9c9c] flex items-center pl-[13px] text-[24px] text-[#111111]">EFW Panel Dataset</div>
      </Section>
      <div className="h-[8px] shrink-0" />
      <Section cls="h-[175px]">
        <div className="h-[48px] flex items-center">
          <div className="w-[54px] flex justify-center shrink-0"><Chev dir="down" w={20} h={11} /></div>
          <svg width="30" height="31" viewBox="0 0 30 31" className="shrink-0">
            {[0, 1, 2, 3].map((r) => [0, 1, 2, 3].map((c) => (
              <rect key={`${r}${c}`} x={c * 8} y={r * 8} width="5.5" height="5.5" fill={r === 0 ? '#8c8c8c' : '#a78cc8'} />
            )))}
          </svg>
          <span className={`ml-[20px] text-[25px] text-[#d8d8d8] ${med}`}>Select</span>
        </div>
        <div className="h-[32px] leading-[32px] pl-[20px] text-[24px] text-[#999999]">Table</div>
        <div className="mt-[17px] ml-[20px] w-[620px] h-[51px] border-2 border-[#8a8a8a] flex items-center pl-[24px] pr-[21px]">
          <svg width="24" height="24" viewBox="0 0 24 24" className="shrink-0">
            <rect x="1" y="1" width="22" height="5" fill="none" stroke="#dcae76" strokeWidth="2" />
            <rect x="1" y="8" width="22" height="15" fill="none" stroke="#808080" strokeWidth="2" />
            <path d="M5 13 H19 M5 18 H19" stroke="#808080" strokeWidth="2" strokeDasharray="3 1.5" />
          </svg>
          <span className="ml-[25px] text-[24px] text-[#c8c8c8] flex-1">EFW Panel Dataset</span>
          <Caret />
        </div>
      </Section>
      <div className="h-[6px] shrink-0" />
      <Section cls="h-[1045px] border-b-0">
        <div className="h-[50px] flex items-center">
          <div className="w-[54px] flex justify-center shrink-0"><Chev dir="down" w={20} h={11} /></div>
          <svg width="30" height="32" viewBox="0 0 30 32" className="shrink-0">
            <g fill="#6c6c6c"><rect x="0" y="0" width="5.5" height="5" /><rect x="16" y="0" width="5.5" height="5" /><rect x="24" y="0" width="5" height="5" /><rect x="0" y="7" width="5.5" height="25" /><rect x="16" y="7" width="5.5" height="25" /><rect x="24" y="7" width="5" height="16" /></g>
            <rect x="8" y="0" width="6" height="5" fill="#d8d8d8" />
            <rect x="8" y="7" width="6" height="25" fill="#4fb0a8" />
            <path d="M20 27 L24 31 L30 22" stroke="#8aa650" strokeWidth="1.5" fill="none" />
          </svg>
          <span className={`ml-[20px] text-[25px] text-[#d8d8d8] ${med}`}>Column Selection</span>
        </div>
        <div className="h-[42px] flex items-center pl-[20px] pr-[28px]">
          <Check />
          <span className="ml-[18px] text-[24px] text-[#e0e0e0] flex-1">Select All</span>
          <RefreshCw size={25} strokeWidth={1.5} color="#c4c4c4" className="mb-[6px]" />
        </div>
        <div className="h-[2px]" />
        {cols.map(([label, type = 'String', tIcon = 'Aa', dbl]) => (
          <div key={label} className={`flex items-center pl-[34px] shrink-0 ${dbl ? 'h-[88px]' : 'h-[56px]'}`}>
            <Check />
            <span className={`ml-[13px] w-[48px] shrink-0 italic text-[#8c8c8c] ${tIcon === '#' ? 'pl-[4px] text-[24px]' : 'text-[23px]'}`}>{tIcon}</span>
            <span className={`w-[344px] shrink-0 text-[24px] leading-[41px] text-[#e2e2e2] whitespace-pre-line ${dbl ? '' : 'pb-[4px]'}`}>{label}</span>
            <div className="w-[168px] h-[50px] border-2 border-[#8a8a8a] flex items-center pl-[20px] pr-[19px] justify-between shrink-0">
              <span className="text-[24px] text-[#bcbcbc]">{type}</span>
              <Caret />
            </div>
          </div>
        ))}
      </Section>
    </div>
  );
}

export default function App() {
  return (
    <div className="min-h-[2240px] bg-white pt-[224px] pl-[11px] font-['Liberation_Sans',Arial,sans-serif]">
      <div className="w-[3564px] h-[1712px] bg-[#2a2a2a] flex flex-col gap-[6px] overflow-hidden pb-[4px]">
        <Toolbar />
        <div className="flex h-[1528px] shrink-0">
          <LeftPanel />
          <Center />
          <RightPanel />
        </div>
      </div>
    </div>
  );
}
